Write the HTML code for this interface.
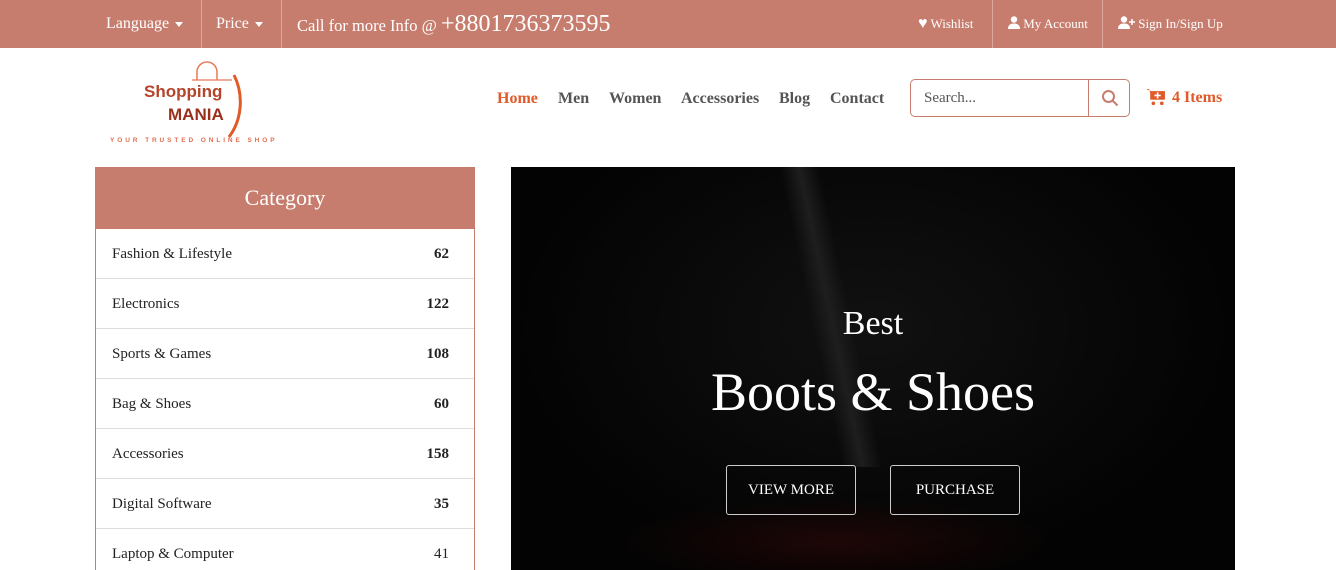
<!DOCTYPE html>
<html style="width:1336px;height:570px;overflow:hidden"><head><meta charset="utf-8"><style>
*{margin:0;padding:0;box-sizing:border-box}
body{width:1336px;height:570px;overflow:hidden;background:#fff;font-family:"Liberation Serif",serif;position:relative}
.top{position:absolute;left:0;top:0;width:1336px;height:48px;background:#c77d6e;color:#fff}
.top span{position:absolute;top:0;height:48px;line-height:48px;font-size:16px}
.sep{position:absolute;top:0;width:1px;height:48px;background:#dba89c}
.caret{display:inline-block;border-left:4px solid transparent;border-right:4px solid transparent;border-top:5px solid #fff;vertical-align:middle;margin-left:6px}
.nav a{position:absolute;top:90px;font-size:16px;font-weight:bold;color:#555;text-decoration:none}
.cat{position:absolute;left:95px;top:167px;width:380px;height:420px;border:1px solid #c77d6e}
.cat h2{height:61px;background:#c77d6e;color:#fff;font-weight:normal;font-size:22px;text-align:center;line-height:60px}
.row{height:50px;border-bottom:1px solid #ddd;padding:0 25px 0 16px;display:flex;justify-content:space-between;align-items:center;font-size:15px;color:#222;padding-top:2px}
.row b{font-weight:bold}
.hero{position:absolute;left:511px;top:167px;width:724px;height:403px;background:radial-gradient(ellipse at 50% 40%,#111 0%,#030303 70%);overflow:hidden;color:#fff;text-align:center}
.btn{position:absolute;top:298px;height:50px;border:1px solid #ccc;border-radius:3px;line-height:48px;font-size:15px}
</style></head><body>
<div class="top">
<span style="left:106px;font-size:16px">Language<i class="caret"></i></span>
<div class="sep" style="left:201px"></div>
<span style="left:216px;font-size:16px">Price<i class="caret"></i></span>
<div class="sep" style="left:281px"></div>
<span style="left:297px;font-size:16.5px">Call for more Info @ <span style="position:static;font-size:24px">+8801736373595</span></span>
<span style="left:918px;font-size:13px"><span style="position:static;font-size:16px">&#9829;</span> Wishlist</span>
<div class="sep" style="left:992px"></div>
<span style="left:1008px;font-size:13px"><svg width="12" height="13" viewBox="0 0 12 13" style="vertical-align:-1px"><circle cx="6" cy="3.5" r="3.2" fill="#fff"/><path d="M0 13c0-4 2.5-5.5 6-5.5s6 1.5 6 5.5z" fill="#fff"/></svg> My Account</span>
<div class="sep" style="left:1102px"></div>
<span style="left:1118px;font-size:13px"><svg width="17" height="13" viewBox="0 0 17 13" style="vertical-align:-1px"><circle cx="6" cy="3.5" r="3.2" fill="#fff"/><path d="M0 13c0-4 2.5-5.5 6-5.5s6 1.5 6 5.5z" fill="#fff"/><path d="M14 3v6M11 6h6" stroke="#fff" stroke-width="1.5"/></svg> Sign In/Sign Up</span>
</div>
<div style="position:absolute;left:110px;top:58px;width:170px;height:90px">
<svg width="170" height="90" style="position:absolute;left:0;top:0"><path d="M87 22v-8a10 10 0 0 1 20 0v8" stroke="#e8795a" stroke-width="1.5" fill="none"/><path d="M82 22h40" stroke="#e8795a" stroke-width="1.2"/><path d="M124 17c10 20 8 45-5 62" stroke="#e05a2a" stroke-width="3" fill="none"/></svg>
<div style="position:absolute;left:34px;top:24px;font-family:'Liberation Sans',sans-serif;font-weight:bold;font-size:17px;color:#b5442a">Shopping</div>
<div style="position:absolute;left:58px;top:47px;font-family:'Liberation Sans',sans-serif;font-weight:bold;font-size:17px;color:#9a2f1c">MANIA</div>
<div style="position:absolute;left:0;top:79px;font-family:'Liberation Sans',sans-serif;font-size:6.5px;font-weight:bold;letter-spacing:2.9px;color:#e07050;white-space:nowrap">YOUR TRUSTED ONLINE SHOP</div>
</div>
<div class="nav">
<a style="left:497px;color:#e05a2a">Home</a><a style="left:558px">Men</a><a style="left:609px">Women</a><a style="left:681px">Accessories</a><a style="left:779px">Blog</a><a style="left:830px">Contact</a>
</div>
<div style="position:absolute;left:910px;top:79px;width:220px;height:38px;border:1px solid #c77d6e;border-radius:5px">
<span style="position:absolute;left:13px;top:10px;font-size:15px;color:#555">Search...</span>
<div style="position:absolute;left:177px;top:0;width:1px;height:36px;background:#c77d6e"></div>
<svg style="position:absolute;left:190px;top:9px" width="18" height="18" viewBox="0 0 18 18"><circle cx="7.5" cy="7.5" r="5.5" stroke="#c77d6e" stroke-width="2" fill="none"/><path d="M11.5 11.5l5 5" stroke="#c77d6e" stroke-width="2"/></svg>
</div>
<svg style="position:absolute;left:1146px;top:88px" width="20" height="18" viewBox="0 0 19 17"><path d="M0 1h3l3 10h10l2-8H5" fill="#e05a2a"/><rect x="4" y="3" width="14" height="8" fill="#e05a2a"/><path d="M11 4v6M8 7h6" stroke="#fff" stroke-width="1.5"/><circle cx="7" cy="14.5" r="1.7" fill="#e05a2a"/><circle cx="15" cy="14.5" r="1.7" fill="#e05a2a"/></svg>
<div style="position:absolute;left:1172px;top:89px;font-size:16px;font-weight:bold;color:#e05a2a">4 Items</div>
<div class="cat"><h2>Category</h2>
<div class="row"><span>Fashion &amp; Lifestyle</span><b>62</b></div>
<div class="row"><span>Electronics</span><b>122</b></div>
<div class="row"><span>Sports &amp; Games</span><b>108</b></div>
<div class="row"><span>Bag &amp; Shoes</span><b>60</b></div>
<div class="row"><span>Accessories</span><b>158</b></div>
<div class="row"><span>Digital Software</span><b>35</b></div>
<div class="row"><span>Laptop &amp; Computer</span><span>41</span></div>
</div>
<div class="hero">
<div style="position:absolute;left:300px;top:0;width:40px;height:300px;background:linear-gradient(90deg,transparent,#1e1e1e,transparent);transform:skewX(12deg)"></div>
<div style="position:absolute;left:100px;top:330px;width:450px;height:90px;background:radial-gradient(ellipse,#1e0606 0%,transparent 70%)"></div>
<div style="position:absolute;left:0;width:724px;top:138px;font-size:34px">Best</div>
<div style="position:absolute;left:0;width:724px;top:194px;font-size:54px">Boots &amp; Shoes</div>
<div class="btn" style="left:215px;width:130px">VIEW MORE</div>
<div class="btn" style="left:379px;width:130px">PURCHASE</div>
</div>
</body></html>
